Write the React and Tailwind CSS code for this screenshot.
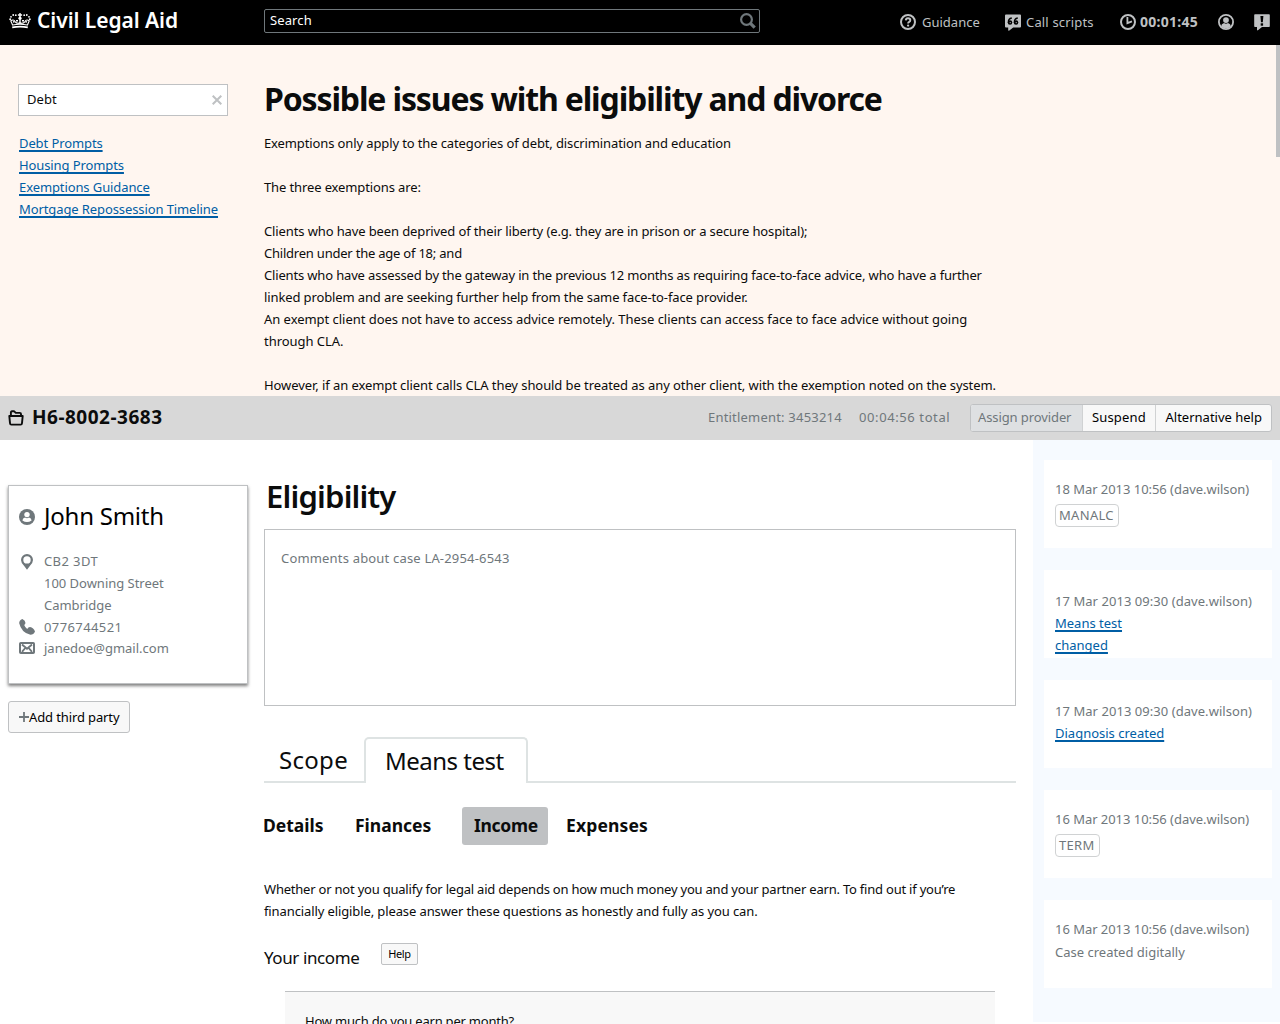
const Crown = () => (
  <svg width="22" height="17" viewBox="0 0 22 17" fill="none" stroke="#fff" className="shrink-0">
    <path d="M3.2 15.3Q11 13.9 18.8 15.3" strokeWidth="1.8" />
    <path d="M3.6 13 1.8 9Q4.4 6.8 6 9.6Q8 12.2 11 10.8Q14 12.2 16 9.6Q17.6 6.8 20.2 9L18.4 13Q11 11.4 3.6 13Z" strokeWidth="1.1" />
    <path d="M11 12V1M8.9 3H13.1M7 8.8H9M13 8.8H15" strokeWidth="1.4" />
    <g fill="#fff" stroke="none">
      <circle cx="1.2" cy="7.2" r="1" /><circle cx="2" cy="4.8" r=".9" /><circle cx="4.2" cy="3" r=".9" /><circle cx="6.8" cy="3.2" r=".9" />
      <circle cx="20.8" cy="7.2" r="1" /><circle cx="20" cy="4.8" r=".9" /><circle cx="17.8" cy="3" r=".9" /><circle cx="15.2" cy="3.2" r=".9" />
      <circle cx="11" cy="6.2" r="1.6" /><circle cx="4.8" cy="9.8" r=".9" /><circle cx="17.2" cy="9.8" r=".9" />
    </g>
  </svg>
);

const SearchIcon = () => (
  <svg width="16" height="16" viewBox="0 0 16 16" fill="none" stroke="#6f777b">
    <circle cx="6.5" cy="6.5" r="5.4" strokeWidth="2.2" />
    <path d="m10.4 10.4 4.3 4.3" strokeWidth="3.2" />
  </svg>
);

const HelpIcon = () => (
  <svg width="16" height="16" viewBox="0 0 16 16" fill="none" stroke="#bfc1c3">
    <circle cx="8" cy="8" r="7" strokeWidth="2" />
    <path d="M5.8 6.4Q5.9 4.3 8 4.3Q10.3 4.3 10.3 6.2Q10.3 7.2 9.2 7.9Q8.1 8.5 8.1 9.5" strokeWidth="1.9" />
    <circle cx="8.1" cy="11.6" r="1.15" fill="#bfc1c3" stroke="none" />
  </svg>
);

const ScriptIcon = () => (
  <svg width="16" height="17" viewBox="0 0 16 17">
    <path d="M1 .5H15Q16 .5 16 1.5V12.5Q16 13.5 15 13.5H8.2L4 16.8L3.2 16.4V13.5H1Q0 13.5 0 12.5V1.5Q0 .5 1 .5Z" fill="#bfc1c3" />
    <g fill="#000">
      <circle cx="5" cy="8.5" r="2.3" /><circle cx="11" cy="8.5" r="2.3" />
    </g>
    <path d="M3.4 8.4Q3 4.6 6.8 4M9.4 8.4Q9 4.6 12.8 4" fill="none" stroke="#000" strokeWidth="1.3" />
    <circle cx="5.2" cy="8.6" r=".6" fill="#bfc1c3" /><circle cx="11.2" cy="8.6" r=".6" fill="#bfc1c3" />
  </svg>
);

const ClockIcon = () => (
  <svg width="16" height="16" viewBox="0 0 16 16" fill="none" stroke="#bfc1c3" strokeWidth="2">
    <circle cx="8" cy="8" r="7" />
    <path d="M7.4 3V9.2L12 7.3" strokeWidth="1.8" />
  </svg>
);

const UserRing = () => (
  <svg width="16" height="16" viewBox="0 0 16 16">
    <circle cx="8" cy="8" r="7.1" fill="none" stroke="#bfc1c3" strokeWidth="1.8" />
    <circle cx="8" cy="6.1" r="2.9" fill="#bfc1c3" />
    <path d="M3 12.6Q3.3 9.6 6 9.1Q8 10.4 10 9.1Q12.7 9.6 13 12.6Q8 16.4 3 12.6Z" fill="#bfc1c3" />
  </svg>
);

const AlertIcon = () => (
  <svg width="16" height="17" viewBox="0 0 16 17">
    <path d="M1 .2H15Q15.8 .2 15.8 1V12.2Q15.8 13 15 13H8L3.6 16.4L3 16V13H1Q.2 13 .2 12.2V1Q.2 .2 1 .2Z" fill="#bfc1c3" />
    <path d="M6.4 2H9.4L8.8 8.2H7Z" fill="#000" />
    <rect x="6.7" y="9.3" width="2.4" height="2.4" fill="#000" />
  </svg>
);

const FolderIcon = () => (
  <svg width="16" height="16" viewBox="0 0 16 16" fill="none" stroke="#0b0c0c" strokeWidth="1.9" strokeLinejoin="round">
    <path d="M1.3 6H14.7L14 13.2Q13.9 14.6 12.6 14.6H3.4Q2.1 14.6 2 13.2Z" />
    <path d="M2.9 5.6V2.6Q2.9 1.3 4 1.3H6.2L7.8 2.9H11.8Q13 2.9 13 4V5.6" />
  </svg>
);

const PersonDisc = () => (
  <svg width="16" height="16" viewBox="0 0 16 16">
    <circle cx="8" cy="8" r="8" fill="#6f777b" />
    <circle cx="8" cy="5.6" r="2.7" fill="#fff" />
    <path d="M3.4 11.4Q3.6 9 6 8.6Q8 9.8 10 8.6Q12.4 9 12.6 11.4Q8 14.4 3.4 11.4Z" fill="#fff" />
  </svg>
);

const PinIcon = () => (
  <svg width="12" height="16" viewBox="0 0 12 16">
    <path fillRule="evenodd" d="M6 0A6 6 0 0 1 12 6Q12 9 8.8 12L6 15.8L3.2 12Q0 9 0 6A6 6 0 0 1 6 0ZM6 2.2A3.7 3.7 0 1 0 6 9.6A3.7 3.7 0 1 0 6 2.2Z" fill="#6f777b" />
  </svg>
);

const PhoneIcon = () => (
  <svg width="16" height="16" viewBox="0 0 16 16" fill="#6f777b">
    <path d="M.2 4.2Q0 1.4 3.4 0Q6.4 1.4 6.5 4Q6 5.6 5.2 6.1Q5.9 8.2 8.2 9.9Q9.2 8.3 11 8.1Q14.6 9 16 12.6Q14.6 15.8 11.4 15.8Q2.4 13.6 .2 4.2Z" />
  </svg>
);

const MailIcon = () => (
  <svg width="16" height="12" viewBox="0 0 16 12" fill="none" stroke="#6f777b">
    <rect x="1" y="1" width="14" height="10" rx=".8" strokeWidth="2" />
    <path d="M3 2.6 8 6.8 13 2.6M3 9.8 6.3 6M13 9.8 9.7 6" strokeWidth="1.9" />
  </svg>
);

const guidanceLinks = ['Debt Prompts', 'Housing Prompts', 'Exemptions Guidance', 'Mortgage Repossession Timeline'];
const link = 'text-[#005ea5] underline decoration-2 underline-offset-2 [text-decoration-skip-ink:none]';

function LogCard({ date, pad = 'pt-[18px]', spacing = 'tracking-[-0.04px]', children }) {
  return (
    <div className={`h-22 bg-white pl-[11px] text-[#6f777b] ${pad}`}>
      <div className={`whitespace-nowrap ${spacing}`}>{date} (dave.wilson)</div>
      {children}
    </div>
  );
}

const Tag = ({ children }) => (
  <span className="mt-1 flex h-[23px] w-fit items-center rounded border-[1.5px] border-[#d0d2d3] pr-1 pl-[3px] leading-none tracking-[0.3px]">{children}</span>
);

export default function App() {
  return (
    <div className="flex h-[1024px] w-[1280px] flex-col overflow-hidden bg-white font-['Noto_Sans',sans-serif] text-[13px] leading-[22px] text-[#0b0c0c]">
      <header className="flex h-[45px] shrink-0 items-start bg-black text-[#bfc1c3]">
        <div className="flex w-[264px] items-center gap-[6px] pt-1 pl-[9px]">
          <Crown />
          <span className="text-[21px] leading-8 font-semibold tracking-[-0.06px] whitespace-nowrap text-white">Civil Legal Aid</span>
        </div>
        <div className="mt-[9px] flex h-6 w-[496px] items-center justify-between rounded-[2px] border border-[#6f777b] pr-[3px] pl-[5px] tracking-[0.12px] text-white">
          <span className="pb-0.5">Search</span>
          <SearchIcon />
        </div>
        <nav className="flex flex-1 items-center pt-[11px] pl-[140px] whitespace-nowrap">
          <div className="flex w-[105px] items-center gap-[6px]"><HelpIcon /><span>Guidance</span></div>
          <div className="flex w-[115px] items-center gap-[5px]"><ScriptIcon /><span className="tracking-[0.16px]">Call scripts</span></div>
          <div className="flex w-[98px] items-center gap-1"><ClockIcon /><span className="text-sm leading-[22px] font-bold tracking-[0.25px]">00:01:45</span></div>
          <div className="w-9"><UserRing /></div>
          <AlertIcon />
        </nav>
      </header>

      <section className="flex h-[351px] shrink-0 justify-between bg-[#fff6f0]">
        <aside className="w-[264px] pt-[39px] pl-[18px]">
          <div className="flex h-8 w-[210px] items-center justify-between border border-[#bfc1c3] bg-white pr-[5px] pl-2">
            <span className="pb-0.5 tracking-[0.1px]">Debt</span>
            <svg width="10" height="10" viewBox="0 0 10 10" stroke="#bfc1c3" strokeWidth="2"><path d="m.7.7 8.6 8.6M9.3.7.7 9.3" /></svg>
          </div>
          <ul className="mt-4 pl-px">
            {guidanceLinks.map((t) => <li key={t} className="whitespace-nowrap tracking-[-0.1px]"><a className={link}>{t}</a></li>)}
          </ul>
        </aside>
        <article className="flex-1 pt-8 tracking-[-0.12px] whitespace-nowrap">
          <h1 className="h-[55px] text-[32px] leading-[44px] font-bold tracking-[-1.14px]">Possible issues with eligibility and divorce</h1>
          <p>Exemptions only apply to the categories of debt, discrimination and education</p>
          <p className="mt-[22px]">The three exemptions are:</p>
          <p className="mt-[22px]">Clients who have been deprived of their liberty (e.g. they are in prison or a secure hospital);</p>
          <p className="tracking-[-0.22px]">Children under the age of 18; and</p>
          <p><span className="tracking-[-0.16px]">Clients who have assessed by the gateway in the previous 12 months as requiring face-to-face advice, who have a further</span><br />linked problem and are seeking further help from the same face-to-face provider.</p>
          <p className="tracking-[-0.04px]">An exempt client does not have to access advice remotely. These clients can access face to face advice without going<br />through CLA.</p>
          <p className="mt-[22px] tracking-[-0.075px]">However, if an exempt client calls CLA they should be treated as any other client, with the exemption noted on the system.</p>
        </article>
        <div className="h-28 w-1 bg-[#bfc1c3]" />
      </section>

      <div className="flex h-11 shrink-0 items-center bg-[#d8d8d8] pr-2 pl-2 whitespace-nowrap">
        <FolderIcon />
        <h2 className="-mt-[3px] ml-2 flex-1 text-[19px] font-bold tracking-[0.5px]">H6-8002-3683</h2>
        <span className="w-[151px] pb-0.5 tracking-[0.2px] text-[#6f777b]">Entitlement: 3453214</span>
        <span className="w-[111px] pb-0.5 tracking-[0.6px] text-[#6f777b]">00:04:56 total</span>
        <div className="flex h-7 w-[302px] overflow-hidden rounded-[3px] border border-[#bfc1c3] bg-[#f8f8f8] text-black">
          <span className="flex w-[111px] items-center bg-[#dee0e2] pb-0.5 pl-[7px] tracking-[-0.1px] text-[#6f777b]">Assign provider</span>
          <span className="flex w-[74px] items-center border-x border-[#d0d2d3] pb-0.5 pl-[9px] tracking-[0.15px]">Suspend</span>
          <span className="flex items-center pb-0.5 pl-[9.5px]">Alternative help</span>
        </div>
      </div>

      <main className="flex h-[584px] shrink-0">
        <aside className="w-[264px] pt-[45px] pl-2">
          <div className="h-[199px] w-60 border border-[#bfc1c3] px-[10px] pt-[15px] text-[#6f777b] shadow-[0_2px_3px_rgba(0,0,0,0.5)]">
            <div className="flex items-center gap-[9px] text-black"><PersonDisc /><span className="pb-0.5 text-2xl leading-[30px] tracking-[-0.25px]">John Smith</span></div>
            <div className="mt-[17px] flex">
              <div className="w-[25px] pt-1 pl-[2px]"><PinIcon /></div>
              <div className="tracking-[-0.02px]"><span className="tracking-[0.4px]">CB2 3DT</span><br />100 Downing Street<br />Cambridge</div>
            </div>
            <div className="flex items-center gap-[9px]"><PhoneIcon /><span className="tracking-[0.4px]">0776744521</span></div>
            <div className="-mt-px flex items-center gap-[9px]"><MailIcon /><span>janedoe@gmail.com</span></div>
          </div>
          <button className="mt-[17px] flex h-8 w-[122px] items-center rounded-[3px] border border-[#bfc1c3] bg-[#f8f8f8] pl-[10px] text-black">
            <svg width="10" height="10" viewBox="0 0 10 10" stroke="#6f777b" strokeWidth="1.8"><path d="M5 0V10M0 5H10" /></svg>
            <span className="tracking-[-0.12px] whitespace-nowrap">Add third party</span>
          </button>
        </aside>

        <section className="w-[769px]">
          <h1 className="mt-9 pl-[2px] text-[31px] leading-[40px] font-semibold tracking-[-0.8px]">Eligibility</h1>
          <div className="mt-[13px] h-[177px] w-[752px] border border-[#bfc1c3] pt-[17px] pl-4 tracking-[0.18px] text-[#6f777b]">Comments about case LA-2954-6543</div>
          <div className="mt-[31px] flex h-[46px] w-[752px] text-2xl leading-[46px] whitespace-nowrap">
            <div className="w-[100px] border-b-2 border-[#dee3e3] pl-[15px] tracking-[0.3px]">Scope</div>
            <div className="w-[164px] rounded-t-[5px] border-2 border-b-0 border-[#dee3e3] pl-[19px] leading-[43px] tracking-[-0.5px]">Means test</div>
            <div className="flex-1 border-b-2 border-[#dee3e3]" />
          </div>
          <div className="-ml-px mt-6 flex h-[38px] items-center text-[17.5px] font-bold">
            <span className="w-23 pb-0.5">Details</span>
            <span className="w-[107px] pb-0.5">Finances</span>
            <span className="flex h-[38px] w-[86px] items-center rounded-[3px] bg-[#bfc1c3] pb-0.5 pl-3 tracking-[-0.3px]">Income</span>
            <span className="pb-0.5 pl-[18px] tracking-[0.15px]">Expenses</span>
          </div>
          <p className="mt-[33px] tracking-[-0.215px] whitespace-nowrap">Whether or not you qualify for legal aid depends on how much money you and your partner earn. To find out if you’re<br /><span className="tracking-[-0.11px]">financially eligible, please answer these questions as honestly and fully as you can.</span></p>
          <div className="mt-[21px] flex h-[29px] items-start">
            <h3 className="w-[117px] pt-1 text-[17px] tracking-[-0.4px]">Your income</h3>
            <button className="h-[22px] w-[37px] rounded-[2px] border border-[#bfc1c3] bg-[#f8f8f8] text-[11px] leading-5 tracking-[-0.4px] text-black">Help</button>
          </div>
          <div className="mt-[19px] ml-[21px] h-20 w-[710px] border-t border-[#bfc1c3] bg-[#f8f8f8] pt-[18px] pl-5 tracking-[-0.22px]">How much do you earn per month?</div>
        </section>

        <aside className="flex h-[582px] w-[247px] flex-col gap-[22px] bg-[#f6faff] pt-5 pr-2 pl-[11px]">
          <LogCard date="18 Mar 2013 10:56"><Tag>MANALC</Tag></LogCard>
          <LogCard date="17 Mar 2013 09:30" pad="pt-5" spacing="tracking-[0.05px]"><a className={link}>Means test<br />changed</a></LogCard>
          <LogCard date="17 Mar 2013 09:30" pad="pt-5" spacing="tracking-[0.05px]"><a className={link}>Diagnosis created</a></LogCard>
          <LogCard date="16 Mar 2013 10:56"><Tag>TERM</Tag></LogCard>
          <LogCard date="16 Mar 2013 10:56"><div className="pt-px">Case created digitally</div></LogCard>
        </aside>
      </main>
    </div>
  );
}
